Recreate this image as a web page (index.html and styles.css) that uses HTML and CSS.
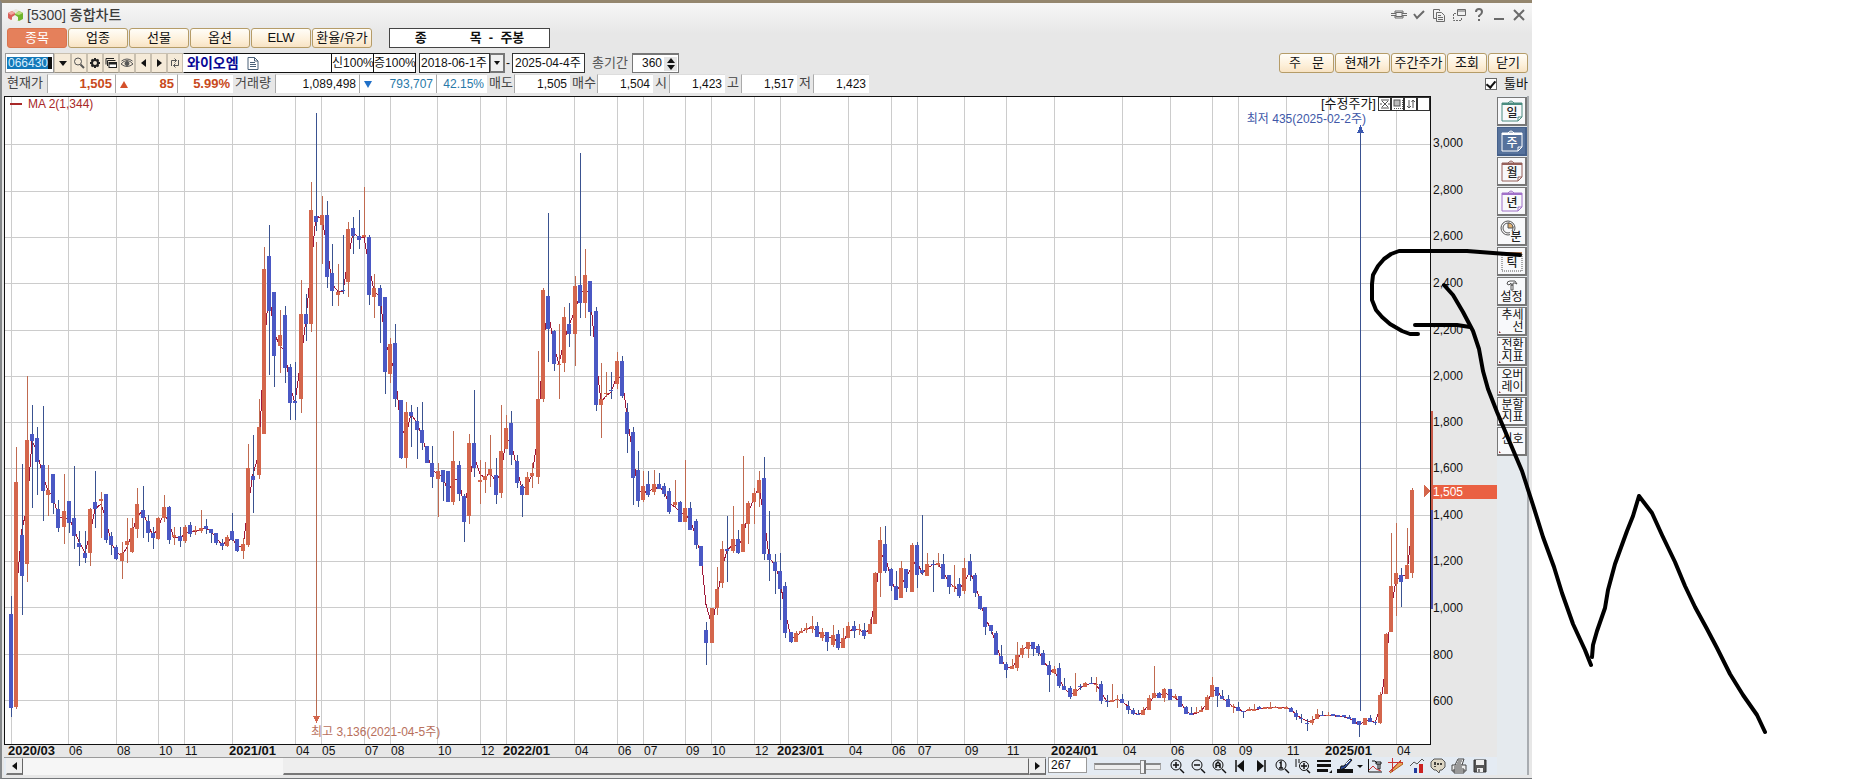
FILE: index.html
```html
<!DOCTYPE html>
<html lang="ko">

<head>
  <meta charset="UTF-8">
  <meta name="viewport" content="width=device-width, initial-scale=1.0">
  <title>[5300] 종합차트</title>
  <link rel="stylesheet" href="styles.css">
</head>

<body>
  <div class="window">
    <header class="titlebar">
      <svg class="logo" width="17" height="14" viewBox="0 0 17 14">
        <path d="M5 3l4-2 4 2-4 2z" fill="#e8e4d8" />
        <path d="M1 5l4-2 3 2v5l-4 2-3-2z" fill="#d9605a" />
        <path d="M1 5l4-2 3 2-4 2z" fill="#f0a8a0" />
        <path d="M8 6l4-3 4 2v6l-4 2-4-2z" fill="#6fb52c" />
        <path d="M8 6l4-3 4 2-4 2z" fill="#b9dc7a" />
        <path d="M5 9l3-2 3 2v3l-3 2-3-2z" fill="#f4f1ea" />
      </svg>
      <h1 class="title">[5300] 종합차트</h1>
      <div class="window-buttons">
        <button aria-label="연결"><svg width="16" height="14" viewBox="0 0 16 14"><path d="M4 5V3h8v2M4 8v2h8V8M0 5.500h5M0 7.500h5M11 5.500h5M11 7.500h5" /><rect x="5" y="4.500" width="6" height="4" /></svg></button>
        <button aria-label="확인"><svg width="16" height="14" viewBox="0 0 16 14"><path class="thick" d="M3 6l3 4 7-7" /></svg></button>
        <button aria-label="복사"><svg width="16" height="14" viewBox="0 0 16 14"><path d="M8.500 3V1.500h-6v9h3M5.500 4.500h5l3 3v6h-8zM7 7.500h3M7 9.500h5M7 11.500h5" /></svg></button>
        <button aria-label="창 분리"><svg width="16" height="14" viewBox="0 0 16 14"><path d="M6.500 1.500h8v6h-8zM6 3h8" /><path stroke-dasharray="2 1" d="M5 5.500H2.500v7h8V9" /></svg></button>
        <button aria-label="도움말"><svg width="16" height="14" viewBox="0 0 16 14"><path class="thick" d="M5 4q0-3 3-3t3 3q0 2-3 4v1m0 2v2" /></svg></button>
        <button aria-label="최소화"><svg width="16" height="14" viewBox="0 0 16 14"><path class="thick" d="M3 11h10" /></svg></button>
        <button aria-label="창 닫기"><svg width="16" height="14" viewBox="0 0 16 14"><path class="thick" d="M3 2l10 10M13 2L3 12" /></svg></button>
      </div>
    </header>

    <nav class="tabs">
      <button class="btn tab active">종목</button>
      <button class="btn tab">업종</button>
      <button class="btn tab">선물</button>
      <button class="btn tab">옵션</button>
      <button class="btn tab">ELW</button>
      <button class="btn tab">환율/유가</button>
      <div class="chart-name"><span>종</span><span>목 &nbsp;-&nbsp; 주봉</span></div>
    </nav>

    <div class="row search-row">
      <input class="code" type="text" value="066430" aria-label="종목코드">
      <button class="icon-btn drop" aria-label="종목 목록"><i class="down"></i></button>
      <button class="icon-btn" aria-label="검색"><svg viewBox="0 0 14 14"><circle cx="6" cy="5.500" r="3.500" /><path class="thick" d="M8.500 8.500L12 12" /></svg></button>
      <button class="icon-btn" aria-label="설정"><svg class="dark" viewBox="0 0 14 14"><circle class="thick" cx="7" cy="7" r="3" /><path class="thick" d="M7 2v2m0 6v2M2 7h2m6 0h2M3.500 3.500l1.500 1.500m4 4l1.500 1.500m0-7L9 5M5 9l-1.500 1.500" /></svg></button>
      <button class="icon-btn" aria-label="관심"><svg class="dark" viewBox="0 0 14 14"><path d="M2 8.500V2.500h8M3.500 10V4.500h8" /><rect x="5" y="6.500" width="7.500" height="5" fill="#fff" /><path class="thick" d="M5 7.500h7" /></svg></button>
      <button class="icon-btn" aria-label="보기"><svg viewBox="0 0 14 14"><path d="M1 8q6-7 12 0-6 5-12 0zM1.500 5q5.500-4 11 0" /><circle cx="7" cy="7.500" r="2" fill="#555" /></svg></button>
      <button class="icon-btn" aria-label="이전"><i class="left"></i></button>
      <button class="icon-btn" aria-label="다음"><i class="right"></i></button>
      <button class="icon-btn" aria-label="순환"><svg viewBox="0 0 14 14"><path d="M3.500 10V4.500h5M6.500 2.500l2 2-2 2M10.500 4v5.500h-5M7.500 7.500l-2 2 2 2" /></svg></button>
      <div class="name-box">
        <b>와이오엠</b>
        <svg width="12" height="13" viewBox="0 0 12 13"><path d="M1 .500h6.500l3.500 3.500v8.500H1zM7.500.500V4H11M3 5.500h5M3 7.500h6M3 9.500h6" /></svg>
      </div>
      <div class="rate-box">신 <span>100%</span></div>
      <div class="rate-box last">증 <span>100%</span></div>
      <div class="combo">
        <select class="date" aria-label="시작일">
          <option>2018-06-1주</option>
        </select>
        <span class="combo-arrow"><i class="down"></i></span>
      </div>
      <span class="dash">-</span>
      <input class="date end" type="text" value="2025-04-4주" aria-label="종료일">
      <label class="period" for="period">총기간</label>
      <div class="spinner">
        <input id="period" type="text" value="360">
        <span class="arrows"><i class="up"></i><i class="down"></i></span>
      </div>
      <div class="actions">
        <button class="btn wide">주 &nbsp; 문</button>
        <button class="btn wide">현재가</button>
        <button class="btn wide">주간주가</button>
        <button class="btn">조회</button>
        <button class="btn">닫기</button>
      </div>
    </div>

    <div class="row quote-row">
      <span class="q-label first">현재가</span>
      <span class="q-value w68 red">1,505</span>
      <span class="q-value w62 red split"><i class="up"></i>85</span>
      <span class="q-value w56 red pad">5.99%</span>
      <span class="q-label vol">거래량</span>
      <span class="q-value w84">1,089,498</span>
      <span class="q-value w78 blue split"><i class="down"></i>793,707</span>
      <span class="q-value w50 blue">42.15%</span>
      <span class="q-label two">매도</span>
      <span class="q-value w56">1,505</span>
      <span class="q-label two">매수</span>
      <span class="q-value w56">1,504</span>
      <span class="q-label one">시</span>
      <span class="q-value w56">1,423</span>
      <span class="q-label one">고</span>
      <span class="q-value w56">1,517</span>
      <span class="q-label one">저</span>
      <span class="q-value w56">1,423</span>
      <label class="toolbar-check"><input type="checkbox" checked>툴바</label>
    </div>

    <main class="chart">
      <section class="plot">
        <svg id="plot" viewBox="5 97 1425 647" preserveAspectRatio="none">
          <g id="grid"></g>
          <polyline id="ma" />
          <g id="candles"></g>
          <path class="low" d="M1360.500 128V711" />
          <path class="low-head" d="M1357 133l3.500-8 3.500 8z" />
          <path class="high" d="M316.500 242V718" />
          <path class="high-head" d="M313 716h7l-3.500 7z" />
          <path class="high-head" d="M1424 485v12l6-6z" />
        </svg>
        <span class="legend">MA 2(1,344)</span>
        <div class="adjusted">[수정주가]
          <div class="pane-buttons">
            <button aria-label="축소"><svg viewBox="0 0 12 12"><path d="M2 2h8M2 10h8M3 3l6 6M9 3L3 9M1 6h2m6 0h2" /></svg></button>
            <button aria-label="영역"><svg viewBox="0 0 12 12"><rect x="2" y="2" width="6" height="6" fill="#bbb" /><path stroke-dasharray="1 1" d="M10.500 2v9M2 10.500h9" /></svg></button>
            <button aria-label="정렬"><svg viewBox="0 0 12 12"><path d="M4 2v8M2 8l2 2 2-2M8 10V2M6.500 4L8 2l2 2" /></svg></button>
            <button aria-label="비움"></button>
          </div>
        </div>
        <span class="lowest">최저 435(2025-02-2주)</span>
        <span class="highest">최고 3,136(2021-04-5주)</span>
      </section>
      <div class="price-axis" id="prices">
        <i class="range-up"></i>
        <i class="range-down"></i>
        <span class="price-now">1,505</span>
      </div>
      <div class="date-axis" id="dates"></div>

      <aside class="tools">
        <button><svg class="cal green" viewBox="0 0 29 27"><path d="M5 5h20v14l-4 4H5zM21 23v-4h4M11 5q3-4 6 0" /><path class="bar" d="M5 6h20" /><text x="15" y="19">일</text></svg></button>
        <button class="on"><svg class="cal white" viewBox="0 0 29 27"><path d="M5 5h20v14l-4 4H5zM21 23v-4h4M11 5q3-4 6 0" /><path class="bar" d="M5 6h20" /><text x="15" y="19">주</text></svg></button>
        <button><svg class="cal brown" viewBox="0 0 29 27"><path d="M5 5h20v14l-4 4H5zM21 23v-4h4M11 5q3-4 6 0" /><path class="bar" d="M5 6h20" /><text x="15" y="19">월</text></svg></button>
        <button><svg class="cal violet" viewBox="0 0 29 27"><path d="M5 5h20v14l-4 4H5zM21 23v-4h4M11 5q3-4 6 0" /><path class="bar" d="M5 6h20" /><text x="15" y="19">년</text></svg></button>
        <button><svg class="cal clock" viewBox="0 0 29 27"><circle cx="11" cy="10" r="7" /><circle cx="11" cy="10" r="5" /><path fill="#e0b070" d="M11 10V5q5 0 5 5z" /><path stroke="none" fill="#f8f9fb" d="M13 13h13v12H13z" /><text x="19" y="23">분</text></svg></button>
        <button><svg class="cal tick" viewBox="0 0 29 27"><path stroke-dasharray="1 1" d="M5 5v18h20V5" /><path class="bar" d="M5 5h20" /><text x="15" y="19">틱</text></svg></button>
        <button class="stack"><svg width="12" height="11" viewBox="0 0 12 11"><path d="M1 4q0-3 3-3h5l2 3-2-1H7v2H5V3L3 5zM5 5h2v5H5z" /></svg>설정</button>
        <button class="more">추세<br><span class="far">선</span></button>
        <button class="more">전환<br>지표</button>
        <button class="more">오버<br>레이</button>
        <button class="more">분할<br>지표</button>
        <button class="more single">신호</button>
      </aside>

      <footer class="bottom">
        <div class="scrollbar">
          <button aria-label="왼쪽으로"><i class="left"></i></button>
          <div class="track"><div class="thumb"></div></div>
          <button aria-label="오른쪽으로"><i class="right"></i></button>
        </div>
        <input class="count" type="text" value="267" aria-label="봉 개수">
        <input class="zoom" type="range" min="0" max="100" value="76" aria-label="확대 비율">
        <div class="chart-tools">
          <button aria-label="확대"><svg viewBox="0 0 16 16"><circle cx="7" cy="7" r="5" /><path d="M7 4v6M4 7h6" class="thick" /><path class="thick" d="M11 11l4 4" /></svg></button>
          <button aria-label="축소"><svg viewBox="0 0 16 16"><circle cx="7" cy="7" r="5" /><path d="M4 7h6" class="thick" /><path class="thick" d="M11 11l4 4" /></svg></button>
          <button aria-label="전체"><svg viewBox="0 0 16 16"><circle cx="7" cy="7" r="5" /><path d="M5 10V6l2-2 2 2v4M5 7.500h4" class="thick" /><path class="thick" d="M11 11l4 4" /></svg></button>
          <button aria-label="처음"><svg viewBox="0 0 16 16"><path class="thick" d="M4 2v12" /><path class="fill" d="M12 2v12L5 8z" /></svg></button>
          <button aria-label="끝"><svg viewBox="0 0 16 16"><path class="thick" d="M12 2v12" /><path class="fill" d="M4 2v12l7-6z" /></svg></button>
          <button aria-label="기본 크기"><svg viewBox="0 0 16 16"><circle cx="7" cy="7" r="5" /><path d="M5.500 5L7 4v6M5 10h4" class="thick" /><path class="thick" d="M11 11l4 4" /></svg></button>
          <button aria-label="구간 확대"><svg viewBox="0 0 16 16"><path d="M1 1v8M4 1v4" /><circle cx="9" cy="8" r="4.500" /><path d="M9 5v6M6 8h6" class="thick" /><path class="thick" d="M12 12l3 3" /></svg></button>
          <button aria-label="선 굵기"><svg viewBox="0 0 16 16"><path d="M1 2h14v2H1zM1 6h14v3H1zM1 11h11v3H1zM13 15h3v-3z" class="fill" /></svg></button>
          <button aria-label="선 색"><svg viewBox="0 0 16 16"><path d="M0 11h16v4H0z" class="fill" /><path d="M13 1l2 1-7 8-5 2 1-4 3 0z" fill="#2b4a9c" /><path d="M9 6l4-4" stroke="#fff" /></svg></button>
          <button class="tiny" aria-label="색 목록"><i class="down"></i></button>
          <button aria-label="지표 설정"><svg viewBox="0 0 16 16"><path d="M1.500 1v13H15M5 3h3l2 2M9 4h5v2h-5zM11 6v5h2V6" /><path d="M2 12l4-4 3 3 5 2" stroke="#c33" /></svg></button>
          <button aria-label="그리기"><svg viewBox="0 0 16 16"><path d="M2 15L15 6l-3-3-8 9z" fill="#e8a35c" stroke="#b5651d" /><path d="M0 4.500h15M4.500 0v14M1 14L13 2" stroke="#c33" /></svg></button>
          <button aria-label="거래량"><svg viewBox="0 0 16 16"><path d="M5 10h3v5H5z" fill="#223a9c" stroke="none" /><path d="M10 6h4v9h-4z" fill="#c22" stroke="none" /><path d="M1 8l4-4 3 2 5-5 2 2" stroke="#555" /></svg></button>
          <button aria-label="메모"><svg viewBox="0 0 16 16"><path d="M4 1h8l3 3v5l-3 3h-2l-1 3-3-3H4L1 9V4z" fill="#ddd6c4" stroke="#555" /><path class="thick" d="M5 4v3m0 1v1M7 6h2m1 0h2" /></svg></button>
          <button aria-label="인쇄"><svg viewBox="0 0 16 16"><path d="M4 7l3-6h6l-2 6M1 7h14v6H1zM3 11h10v4H3z" fill="#eee" stroke="#444" /><path d="M7 3h4M6 5h4M3 9h8" stroke="#444" /></svg></button>
          <button aria-label="저장"><svg viewBox="0 0 16 16"><path d="M2 2h12v12H2z" fill="#555" stroke="#333" /><path d="M4 2h8v5H4zM5 10h6v4H5z" fill="#eee" stroke="none" /><path d="M7 11v3" /></svg></button>
        </div>
      </footer>
    </main>
  </div>

  <svg class="sketch" viewBox="0 0 1862 779" preserveAspectRatio="none">
    <path d="M1520 255L1493 253 1467 251H1399L1391 254 1384 259 1378 266 1373 275 1372 284V300L1376 310 1382 317 1390 324 1402 331 1410 334H1418" />
    <path d="M1415 325H1457L1470 327" />
    <path d="M1444 285L1453 295 1463 312 1473 331 1479 349 1483 371 1488 389 1497 412 1508 438 1522 471 1533 505 1543 537 1554 567 1562 593 1573 624 1585 650 1591 665" />
    <path d="M1592 657L1593 645 1597 631 1605 608 1608 590 1615 564 1627 531 1633 516 1639 496 1652 513 1662 535 1675 562 1685 586 1695 607 1707 629 1717 648 1730 674 1743 695 1757 715 1765 732" />
  </svg>

  <script src="chart.js"></script>
</body>

</html>
```

FILE: styles.css
```css
* {
  box-sizing: border-box;
}

body {
  margin: 0;
  height: 100vh;
  min-height: 600px;
  display: flex;
  padding-right: 330px;
  position: relative;
  background: #fff;
  color: #111;
  font: 12px/14px "Liberation Sans", "Noto Sans CJK KR", sans-serif;
}

button,
input,
select {
  font: inherit;
  color: inherit;
  padding: 0;
  margin: 0;
}

button {
  border: none;
  background: none;
  display: flex;
  align-items: center;
  justify-content: center;
}

svg {
  fill: none;
  stroke: #555;
  display: block;
}

svg .thick {
  stroke-width: 2;
}

.window {
  flex: 1;
  min-width: 1200px;
  display: flex;
  flex-direction: column;
  padding: 0 3px 3px 2px;
  border-left: 2px solid #85888a;
  border-bottom: 1px solid #74777a;
  border-top: 3px solid #94866e;
  background: linear-gradient(#f6f6f6, #e7e7e7 30px);
}

/* small arrows */
.up,
.down,
.left,
.right {
  width: 0;
  height: 0;
  border: 4px solid transparent;
  flex: none;
}

.up {
  border-top: none;
  border-bottom: 5px solid #111;
}

.down {
  border-bottom: none;
  border-top: 5px solid #111;
}

.left {
  border-left: none;
  border-right: 5px solid #111;
}

.right {
  border-right: none;
  border-left: 5px solid #111;
}

/* title */
.titlebar {
  display: flex;
  align-items: center;
  height: 24px;
  padding: 0 2px 0 3px;
}

.logo {
  stroke: none;
}

.title {
  margin: 0 0 0 3px;
  font-size: 14px;
  font-weight: 500;
  color: #3c3c3c;
}

.window-buttons {
  display: flex;
  gap: 4px;
  margin-left: auto;
}

.window-buttons svg {
  stroke: #6a6a6a;
}

/* buttons */
.btn {
  height: 20px;
  width: 40px;
  border: 1px solid #b59c68;
  border-radius: 3px;
  background: linear-gradient(#fffdf8, #fdf0da 60%, #f8e3c4);
  font-size: 13px;
  white-space: nowrap;
}

.btn.wide {
  width: 55px;
}

.btn.tab {
  width: 60px;
}

.btn.active {
  background: #e5805b;
  border-color: #d9744d;
  color: #fff;
}

.tabs {
  display: flex;
  gap: 1px;
  margin: 1px 0 5px 3px;
}

.chart-name {
  width: 161px;
  height: 20px;
  margin-left: 16px;
  border: 1px solid #444;
  background: #fff;
  display: flex;
  align-items: center;
  justify-content: center;
  gap: 43px;
  font-size: 13px;
  font-weight: bold;
}

.row {
  display: flex;
  height: 20px;
  margin-left: 1px;
  align-items: stretch;
}

.code {
  width: 49px;
  border: 1px solid #999;
  padding-left: 2px;
  color: #d9efff;
  background: linear-gradient(#1478b8, #1478b8) 1px 3px / 41px 12px no-repeat, linear-gradient(#111, #111) 42px 3px / 4px 12px no-repeat, #fff;
}

.icon-btn {
  width: 16px;
  border: 1px solid #c9c0b0;
  border-bottom-color: #9c9486;
  background: #f5ead8;
}

.icon-btn.drop {
  width: 17px;
}

.icon-btn svg {
  width: 14px;
  height: 14px;
  flex: none;
}

.icon-btn .dark {
  stroke: #222;
}

.name-box,
.rate-box {
  display: flex;
  align-items: center;
  background: #fff;
  border: 1px solid #111;
  border-right: none;
}

.name-box {
  width: 148px;
  gap: 8px;
  padding-left: 3px;
  border-left-color: #fff;
  color: #0a0a96;
  font-size: 14px;
}

.name-box svg {
  stroke: #4a6078;
}

.rate-box {
  width: 42px;
  justify-content: space-between;
  white-space: nowrap;
}

.rate-box.last {
  width: 43px;
  border-right: 1px solid #111;
}

.combo {
  display: flex;
  margin-left: 3px;
}

.date {
  width: 71px;
  appearance: none;
  border: 1px solid #333;
  border-radius: 0;
  padding-left: 1px;
  background: #fff;
}

.date.end {
  width: 73px;
  padding-left: 2px;
}

.combo-arrow {
  width: 15px;
  display: flex;
  align-items: center;
  justify-content: center;
  border: 2px solid #777;
  border-left-width: 1px;
  background: #f0f0f0;
}

.combo-arrow .down {
  border-width: 4px 3px 0;
}

.dash {
  width: 7px;
  padding: 3px 1px;
}

.period {
  width: 47px;
  padding: 3px 0 0 7px;
  font-size: 13px;
  color: #555;
}

.spinner {
  display: flex;
  width: 47px;
  border: 1px solid #777;
  border-top-width: 2px;
  background: #fff;
}

.spinner input {
  width: 29px;
  border: none;
  padding-bottom: 2px;
  background: none;
  text-align: right;
}

.arrows {
  flex: 1;
  display: flex;
  flex-direction: column;
  align-items: center;
  justify-content: center;
  gap: 2px;
  margin: 2px 1px 1px 2px;
  background: #e4e4e4;
}

.actions {
  display: flex;
  gap: 1px;
  margin: 0 1px 0 auto;
}

/* quotes */
.quote-row {
  margin-top: 1px;
  margin-bottom: 2px;
}

.q-label {
  padding-top: 2px;
  font-size: 13px;
  color: #444;
  white-space: nowrap;
}

.q-label.first,
.q-label.vol {
  width: 42px;
  padding-left: 2px;
}

.q-label.two {
  width: 27px;
  padding-left: 2px;
}

.q-label.one {
  width: 16px;
  padding-left: 2px;
}

.q-value {
  display: flex;
  align-items: center;
  justify-content: flex-end;
  height: 19px;
  padding-right: 3px;
  border-left: 1px solid #aaa;
  border-top: 1px solid #ddd;
  background: #fff;
}

.q-value.split {
  justify-content: space-between;
  padding-left: 4px;
}

.red {
  color: #c84a20;
  font-size: 13px;
  font-weight: bold;
}

.red .up {
  border-bottom: 7px solid #d4502a;
}

.blue {
  color: #2878a8;
}

.blue .down {
  border-top: 7px solid #2070c8;
}

.w50 {
  width: 51px;
}

.w56 {
  width: 56px;
}

.w62 {
  width: 62px;
}

.w68 {
  width: 68px;
}

.w78 {
  width: 77px;
}

.w84 {
  width: 84px;
}

.toolbar-check {
  display: flex;
  align-items: center;
  gap: 7px;
  margin: 0 1px 0 auto;
  font-size: 13px;
}

.toolbar-check input {
  appearance: none;
  width: 12px;
  height: 12px;
  border: 1px solid #666;
  background: #fff;
}

.toolbar-check input:checked::after {
  content: "";
  display: block;
  width: 4px;
  height: 7px;
  margin: 0 auto;
  border: solid #111;
  border-width: 0 2px 2px 0;
  transform: rotate(40deg);
}

/* chart */
.chart {
  flex: 1;
  min-height: 0;
  display: grid;
  grid-template-columns: 1fr 66px 32px;
  grid-template-rows: 1fr 12px 18px;
}

.plot {
  position: relative;
  border: 1px solid #111;
  background: #fff;
}

.plot > svg {
  position: absolute;
  width: 100%;
  height: 100%;
  stroke: none;
  shape-rendering: crispEdges;
}

#grid path {
  stroke: #ccc;
}

.candle-up {
  fill: #d4664c;
}

.candle-down {
  fill: #4a58c4;
}

.wick-up {
  fill: #c06a50;
}

.wick-down {
  fill: #3a5290;
}

#ma {
  stroke: #a01838;
}

.low {
  stroke: #3a5290;
}

.high {
  stroke: #b86a50;
}

.low-head {
  fill: #3a58b0;
}

.high-head {
  fill: #d4664c;
}

.plot > span,
.adjusted {
  position: absolute;
  white-space: nowrap;
}

.legend {
  top: 0;
  left: 5px;
  color: #a82828;
}

.legend::before {
  content: "";
  display: inline-block;
  width: 12px;
  height: 2px;
  margin: 0 6px 3px 0;
  background: #a82828;
}

.adjusted {
  top: 0;
  right: 0;
  display: flex;
  align-items: center;
  gap: 2px;
  font-size: 13px;
}

.pane-buttons {
  display: flex;
}

.pane-buttons button {
  width: 13px;
  height: 14px;
  border: 1px solid #333;
  background: #fff;
}

.pane-buttons svg {
  width: 12px;
  height: 12px;
  flex: none;
}

.lowest {
  top: 15px;
  right: 64px;
  color: #4058a8;
}

.highest {
  left: 306px;
  bottom: 5px;
  color: #b8705c;
}

.price-axis,
.date-axis {
  position: relative;
}

.price-axis > *,
.date-axis > * {
  position: absolute;
}

.price-axis span {
  left: 2px;
  transform: translateY(-50%);
}

.price-axis .price-now {
  top: 61%;
  right: 0;
  background: #ea6042;
  color: #fff;
}

.range-up,
.range-down {
  left: 0;
  width: 2px;
}

.range-up {
  top: 48.600%;
  height: 15.200%;
  background: #c85a48;
}

.range-down {
  top: 63.800%;
  height: 15.200%;
  background: #4a50b0;
}

.date-axis {
  grid-row: 2;
  grid-column: 1 / 3;
  line-height: 12px;
}

.date-axis b {
  font-size: 13px;
}

/* right toolbar */
.tools {
  grid-row: 1 / 4;
  grid-column: 3;
  display: flex;
  flex-direction: column;
  gap: 1px;
  padding-top: 1px;
  border-right: 2px solid #a8acb0;
  background: #e5eaee;
}

.tools button {
  position: relative;
  width: 30px;
  height: 29px;
  border: 1px solid #777;
  border-right-width: 2px;
  border-bottom-width: 2px;
  background: #f8f9fb;
  line-height: 12px;
}

.tools .on {
  background: #56729c;
  border-color: #45608a;
}

.tools .stack {
  flex-direction: column;
}

.tools .more {
  display: block;
  padding-left: 2px;
}

.tools .more.single {
  padding-bottom: 4px;
}

.tools .more::after {
  content: "";
  position: absolute;
  left: 1px;
  bottom: 1px;
  border: 1px solid transparent;
  border-left-color: #933;
  border-bottom-color: #933;
}

.far {
  padding-left: 11px;
}

.cal {
  width: 29px;
  height: 27px;
  flex: none;
}

.cal .bar {
  stroke-width: 2;
}

.cal text {
  stroke: none;
  fill: #222;
  font-size: 12px;
  font-weight: 500;
  text-anchor: middle;
}

.cal.green {
  stroke: #4a8c80;
}

.cal.white {
  stroke: #fff;
}

.cal.white text {
  fill: #fff;
}

.cal.brown {
  stroke: #96605a;
}

.cal.violet {
  stroke: #a070c8;
}

.cal.tick .bar {
  stroke: #b07850;
}

/* bottom bar */
.bottom {
  grid-row: 3;
  grid-column: 1 / 3;
  display: flex;
  align-items: stretch;
  background: #e4ebf3;
}

.scrollbar {
  flex: 1;
  display: flex;
  padding-left: 2px;
  border-top: 1px solid #999;
}

.scrollbar button,
.thumb {
  border: 1px solid #eee;
  border-right-color: #666;
  border-bottom: 2px solid #777;
  background: #eee;
}

.scrollbar button {
  width: 17px;
}

.track {
  flex: 1;
  display: flex;
  justify-content: flex-end;
  background: #f6f6f6;
}

.thumb {
  width: 74.200%;
}

.count {
  width: 39px;
  margin: 0 7px 2px 2px;
  border: 1px solid #999;
  padding-left: 2px;
}

.zoom {
  appearance: none;
  width: 67px;
  background: none;
}

.zoom::-webkit-slider-runnable-track {
  height: 7px;
  border: 1px solid #aaa;
  border-top: 2px solid #888;
  background: #eee;
}

.zoom::-webkit-slider-thumb {
  appearance: none;
  width: 6px;
  height: 14px;
  margin-top: -5px;
  border: 1px solid #888;
  border-right: 2px solid #777;
  background: #f4f4f4;
}

.chart-tools {
  display: flex;
  gap: 5px;
  margin: 0 9px 0 8px;
}

.chart-tools button {
  width: 16px;
}

.chart-tools .tiny {
  width: 4px;
}

.tiny .down {
  border-width: 3px 3px 0;
}

.chart-tools svg {
  width: 16px;
  height: 16px;
  flex: none;
  stroke: #111;
}

.chart-tools .thick {
  stroke-width: 1.500;
}

.chart-tools .fill {
  fill: #111;
  stroke: none;
}

/* freehand line over everything */
.sketch {
  position: absolute;
  inset: 0;
  width: 100%;
  height: 100%;
  pointer-events: none;
  stroke: #000;
  stroke-width: 4;
  stroke-linecap: round;
  stroke-linejoin: round;
}
```

FILE: chart.js
```js
const plot = { x: 5, y: 97, w: 1425, h: 647 };

// one candle per week: direction, high, body top, body bottom, low
const data = `
d596 614 708 717,u447 482 707 709,d464 535 576 615,u376 440 564 582,d405 434 441 508,d427 438 462 495,
d406 465 491 521,u465 490 495 516,d474 474 503 514,d500 509 528 532,u474 511 527 544,d501 501 523 533,
d466 518 536 549,d531 543 547 566,d531 553 558 563,u508 509 553 566,d471 502 509 528,u492 499 501 538,
d494 494 540 543,d532 536 545 555,d545 547 559 560,u542 553 561 579,u518 541 545 563,u518 528 552 553,
u488 504 529 538,d486 510 518 538,d515 521 533 542,d527 533 538 549,u517 518 539 540,u495 507 518 522,
d506 507 540 544,u527 535 537 545,d527 536 541 547,u525 527 541 543,d522 525 534 537,u526 530 531 535,
u510 528 531 533,d519 526 529 534,d529 529 533 543,d533 533 543 545,d539 543 546 550,u535 537 546 547,
d513 531 540 541,d539 539 551 552,u538 544 551 559,u444 468 545 547,d435 476 480 513,u399 427 475 479,
u247 269 434 434,d225 256 311 375,d292 292 356 387,u310 335 346 373,d306 315 368 383,d364 367 403 420,
d362 401 403 420,u280 314 399 413,d294 314 324 341,u182 210 324 332,d113 216 222 231,u196 215 225 264,
d201 215 277 288,d244 273 291 306,u264 292 295 306,d235 290 291 294,u222 229 282 297,d217 228 236 254,
d210 236 240 249,u187 235 237 237,d235 237 295 305,u274 288 297 318,d285 288 306 343,d297 297 372 394,
u338 344 374 383,d324 343 399 407,d400 400 458 459,u402 412 458 468,d405 412 416 447,d407 421 430 459,
d402 430 443 450,d446 446 463 463,d446 463 477 488,u463 471 479 517,d470 470 482 501,d471 471 502 502,
u431 461 502 505,d461 465 494 501,d494 496 522 542,u434 443 516 524,d390 443 468 477,u460 480 482 504,
u462 476 480 493,u435 469 475 487,d458 475 495 504,u405 451 493 498,u415 428 449 449,d411 423 455 465,
d455 461 483 488,d484 486 495 517,u472 477 495 495,u463 473 476 488,u351 399 477 484,u288 290 399 402,
d213 296 329 362,d330 331 364 371,u324 364 365 399,u307 317 363 372,d303 324 334 347,u276 286 334 366,
d153 285 303 318,u249 275 303 318,d281 281 312 336,d307 311 405 411,u363 399 405 438,u372 393 394 397,
d372 390 391 399,u352 361 384 389,d356 361 396 398,d403 412 434 453,d427 432 478 505,d451 470 501 507,
u471 486 500 502,d471 484 495 497,u470 484 492 495,d473 484 489 489,d483 486 494 497,d488 491 512 514,
u480 502 505 507,d501 502 522 522,u460 508 522 522,d502 508 530 530,d519 521 545 549,d546 546 566 566,
d622 630 643 665,u608 608 643 643,u567 589 608 615,u541 549 583 588,d516 549 551 582,u506 539 551 553,
d530 539 553 554,u456 524 552 552,u501 503 524 544,u488 493 502 524,u471 480 493 507,d457 478 554 560,
d511 554 560 581,d554 562 571 594,d553 571 589 620,d582 586 633 638,d632 632 642 643,u631 633 642 642,
u628 631 633 633,u623 628 630 633,u616 626 629 633,d622 626 637 637,u628 632 638 641,d632 632 642 651,
u625 635 645 647,d630 634 648 650,u628 638 648 648,u622 626 638 638,d621 626 631 638,u624 629 630 635,
d623 630 636 639,u619 624 634 634,u572 573 624 624,u527 540 573 597,d526 544 571 573,d568 569 586 591,
d571 586 600 600,u561 568 598 598,d569 569 588 592,u543 545 592 592,d542 545 575 588,d515 570 573 575,
u553 564 576 576,d560 564 565 592,u553 563 565 567,d554 564 579 579,d575 575 587 594,u565 586 587 592,
d578 584 596 598,u558 568 591 594,d554 561 575 581,d573 575 593 597,d596 596 609 610,d607 607 627 635,
d625 625 631 634,d631 633 655 655,d645 656 664 664,d662 664 670 678,u659 666 669 669,u642 655 668 671,
u645 648 655 658,u642 642 649 658,d642 642 649 656,d644 646 653 656,d650 653 665 665,d661 665 675 692,
u666 669 673 674,d663 668 686 688,d678 686 690 690,d686 688 697 699,u673 689 696 696,d684 686 687 690,
u682 683 687 687,d677 683 684 684,u677 684 685 692,d681 684 701 704,d695 701 702 707,u684 700 702 702,
u695 699 700 708,d694 699 703 703,d701 706 710 714,d708 710 714 715,d710 714 715 715,u707 710 715 715,
u695 698 710 710,u666 693 698 698,d692 693 698 698,u688 689 698 702,d689 689 700 700,u694 696 698 698,
d696 696 707 707,d706 707 714 714,d707 713 715 715,u707 712 713 713,u706 710 712 712,u695 697 710 710,
u677 685 697 697,d687 687 696 707,d690 696 699 699,d695 699 707 707,u704 706 707 713,d702 707 711 711,
d711 711 712 718,u707 709 711 711,u704 709 711 711,d706 707 709 709,u707 707 709 709,u702 707 709 709,
u706 707 708 708,u707 707 709 709,u706 707 709 709,d707 708 712 712,d710 713 717 720,d714 718 719 723,
d719 723 723 731,u716 720 723 725,u709 714 719 719,d711 715 716 716,u712 715 716 716,d714 714 716 716,
d715 715 717 717,d715 715 717 718,d715 717 719 719,d718 718 724 724,d721 721 725 737,u718 718 725 725,
d715 718 722 722,d721 722 723 725,u692 695 723 724,u633 634 694 694,u533 586 632 632,u523 573 584 616,
d568 575 582 607,u528 565 579 579,u488 490 573 578`;

const months = [
  [11, '2020/03'], [68, '06'], [116, '08'], [158, '10'], [184, '11'], [232, '2021/01'],
  [295, '04'], [321, '05'], [364, '07'], [390, '08'], [437, '10'], [480, '12'],
  [506, '2022/01'], [574, '04'], [617, '06'], [643, '07'], [685, '09'], [711, '10'],
  [754, '12'], [780, '2023/01'], [848, '04'], [891, '06'], [917, '07'], [964, '09'],
  [1006, '11'], [1054, '2024/01'], [1122, '04'], [1170, '06'], [1212, '08'], [1238, '09'],
  [1286, '11'], [1328, '2025/01'], [1396, '04']
];

const prices = [
  [144, '3,000'], [191, '2,800'], [237, '2,600'], [283, '2,400'], [330, '2,200'],
  [376, '2,000'], [422, '1,800'], [468, '1,600'], [515, '1,400'], [561, '1,200'],
  [607, '1,000'], [654, '800'], [700, '600']
];

function drawGrid() {
  let paths = '';
  let dates = '';
  let labels = '';
  months.forEach(([x, text]) => {
    const tag = text.length > 2 ? 'b' : 'span';
    const shift = text.length > 2 ? -3 : 1;
    const left = (x + shift - 4) / (plot.w + 68) * 100;
    paths += `<path d="M${x + 0.5} 97V744"/>`;
    dates += `<${tag} style="left:${left}%">${text}</${tag}>`;
  });
  prices.forEach(([y, text]) => {
    paths += `<path d="M5 ${y + 0.5}H1430"/>`;
    labels += `<span style="top:${(y - plot.y) / plot.h * 100}%">${text}</span>`;
  });
  document.getElementById('grid').innerHTML = paths;
  document.getElementById('dates').innerHTML = dates;
  document.getElementById('prices').insertAdjacentHTML('afterbegin', labels);
}

function drawCandles() {
  let shapes = '';
  const points = [];
  let last = null;
  data.trim().split(/,\s*/).forEach((item, i) => {
    const up = item[0] === 'u';
    const [high, top, bottom, low] = item.slice(1).split(' ').map(Number);
    const x = Math.round(11 + i * 5.267);
    const name = up ? 'up' : 'down';
    const body = Math.max(1, bottom - top);
    shapes += `<path class="wick-${name}" d="M${x} ${high}h1V${Math.max(low, high + 1)}h-1z"/>`;
    shapes += `<path class="candle-${name}" d="M${x - 2} ${top}h4v${body}h-4z"/>`;

    // two week average of the closing price
    const close = up ? top : bottom;
    if (last !== null) {
      points.push(`${x},${(close + last) / 2}`);
    }
    last = close;
  });
  document.getElementById('candles').innerHTML = shapes;
  document.getElementById('ma').setAttribute('points', points.join(' '));
}

drawGrid();
drawCandles();
```
